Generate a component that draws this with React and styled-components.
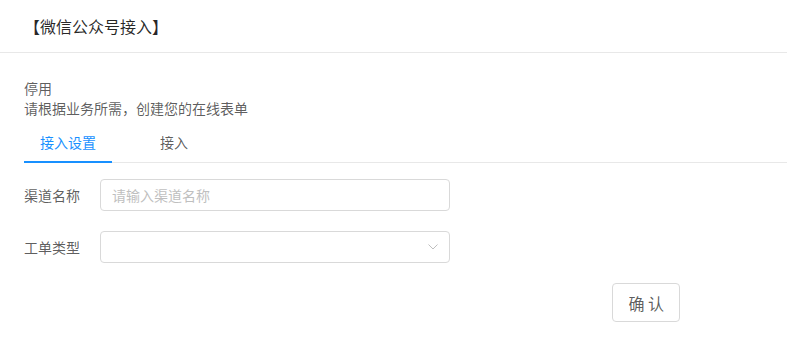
import React from "react";
import styled, { createGlobalStyle } from "styled-components";

const GlobalStyle = createGlobalStyle`
  body {
    margin: 0;
    background: #fff;
    font-family: "Noto Sans CJK SC", "Noto Sans", sans-serif;
    color: rgba(0, 0, 0, 0.65);
  }
`;

const Header = styled.div`
  height: 52px;
  display: flex;
  align-items: center;
  padding: 0 24px;
  border-bottom: 1px solid #e8e8e8;
  font-size: 16px;
  color: rgba(0, 0, 0, 0.85);
`;

const Body = styled.div`
  padding: 25px 0 0 24px;
`;

const Line = styled.div`
  font-size: 14px;
  line-height: 20px;
  color: rgba(0, 0, 0, 0.65);
`;

const TabBar = styled.div`
  display: flex;
  gap: 32px;
  border-bottom: 1px solid #e8e8e8;
`;

const Tab = styled.div`
  padding: 13px 16px 8px;
  line-height: 22px;
  font-size: 14px;
  margin-bottom: -1px;
  border-bottom: 2px solid ${(p) => (p.$active ? "#1890ff" : "transparent")};
  color: ${(p) => (p.$active ? "#1890ff" : "rgba(0, 0, 0, 0.65)")};
`;

const Form = styled.div`
  width: 656px;
  padding-top: 16px;
  display: flex;
  flex-direction: column;
  gap: 20px;
`;

const Row = styled.div`
  display: flex;
  align-items: center;
`;

const Label = styled.div`
  width: 76px;
  font-size: 14px;
  color: rgba(0, 0, 0, 0.65);
`;

const Input = styled.input`
  box-sizing: border-box;
  width: 350px;
  height: 32px;
  padding: 0 11px;
  border: 1px solid #d9d9d9;
  border-radius: 4px;
  font-family: inherit;
  font-size: 14px;
  outline: none;
  &::placeholder {
    color: #bfbfbf;
  }
`;

const Select = styled.div`
  box-sizing: border-box;
  width: 350px;
  height: 32px;
  padding: 0 11px;
  border: 1px solid #d9d9d9;
  border-radius: 4px;
  display: flex;
  align-items: center;
  justify-content: flex-end;
  color: #bfbfbf;
`;

const Footer = styled.div`
  display: flex;
  justify-content: flex-end;
`;

const Button = styled.button`
  height: 39px;
  padding: 0 15px;
  border: 1px solid #d9d9d9;
  border-radius: 4px;
  background: #fff;
  font-family: inherit;
  font-size: 16px;
  color: rgba(0, 0, 0, 0.65);
`;

export default function App() {
  return (
    <>
      <GlobalStyle />
      <Header>【微信公众号接入】</Header>
      <Body>
        <Line>停用</Line>
        <Line>请根据业务所需，创建您的在线表单</Line>
        <TabBar>
          <Tab $active>接入设置</Tab>
          <Tab>接入</Tab>
        </TabBar>
        <Form>
          <Row>
            <Label>渠道名称</Label>
            <Input placeholder="请输入渠道名称" />
          </Row>
          <Row>
            <Label>工单类型</Label>
            <Select>
              <svg width="10" height="6" viewBox="0 0 10 6" fill="none">
                <path d="M0.5 0.5 L5 5 L9.5 0.5" stroke="currentColor" strokeWidth="1" />
              </svg>
            </Select>
          </Row>
          <Footer>
            <Button>确 认</Button>
          </Footer>
        </Form>
      </Body>
    </>
  );
}
